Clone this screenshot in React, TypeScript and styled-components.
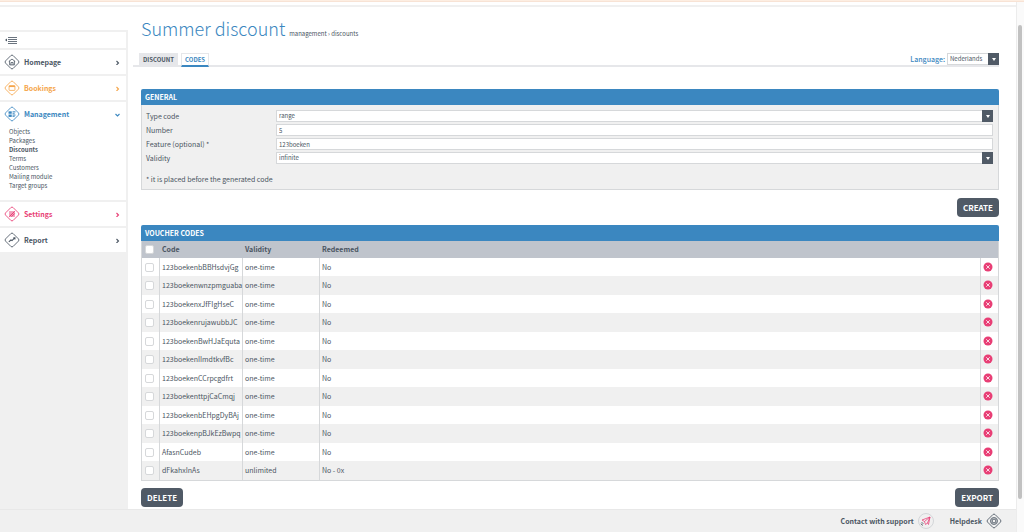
import React from "react";
import styled, { createGlobalStyle, css } from "styled-components";

const blue = "#3b87c0";
const ink = "#4a5562";
const orange = "#f5a54a";
const pink = "#e83e75";
const line = "#d6d8da";
const soft = "#f0f0f0";

const GlobalStyle = createGlobalStyle`
  *, *::before, *::after { box-sizing: border-box; }
  body {
    margin: 0;
    background: #fff;
    color: ${ink};
    font: 7px/9px "Noto Sans CJK SC", "Open Sans", sans-serif;
  }
  button, input, select { font: inherit; color: inherit; margin: 0; }
  a { color: inherit; text-decoration: none; }
  ul { list-style: none; margin: 0; padding: 0; }
`;

const Page = styled.div`
  display: flex;
  flex-direction: column;
  min-height: 100vh;
`;
const TopStrip = styled.div`
  height: 2px;
  background: #fdeee2;
  border-bottom: 1px solid #f8e3d5;
`;
const Body = styled.div`
  flex: 1;
  display: grid;
  grid-template-columns: minmax(0, 1fr) 8px;
`;
const Frame = styled.div`
  display: flex;
  flex-direction: column;
`;
const HeaderBar = styled.div`
  height: 5px;
  border-bottom: 2px solid ${soft};
`;
const Columns = styled.div`
  flex: 1;
  display: grid;
  grid-template-columns: 128px minmax(0, 1fr);
`;
const ScrollTrack = styled.div`
  background: #fafafa;
  border-left: 1px solid #ececec;
  padding: 23px 2px 33px 1px;
  display: flex;
`;
const ScrollThumb = styled.div`
  flex: 1;
  border-radius: 3px;
  background: #c1c1c1;
`;

const Sidebar = styled.nav`
  margin-top: 23px;
  padding: 2px 2px 0 0;
  background: ${soft};
  display: flex;
  flex-direction: column;
  gap: 2px;
`;
const Collapse = styled.button`
  height: 16px;
  padding: 0 5px;
  border: 0;
  background: #fff;
  display: flex;
  align-items: center;
`;
const NavGroup = styled.div`
  background: #fff;
`;
const NavLink = styled.a<{ $color: string }>`
  height: 24px;
  padding: 0 6px 0 4px;
  display: flex;
  align-items: center;
  gap: 4px;
  color: ${(p) => p.$color};
  font-weight: 700;
`;
const NavLabel = styled.span`
  flex: 1;
`;
const SubList = styled.ul`
  padding: 1px 9px 10px;
  font-size: 6px;
  li { height: 9px; }
`;
const SubLink = styled.a<{ $active: boolean }>`
  font-weight: ${(p) => (p.$active ? 700 : 400)};
`;

const Main = styled.main`
  padding: 10px 17px 0 13px;
`;
const TitleRow = styled.header`
  display: flex;
  align-items: baseline;
  gap: 4px;
`;
const Title = styled.h1`
  margin: 0;
  color: ${blue};
  font-size: 18px;
  line-height: 22px;
  font-weight: 300;
`;
const Breadcrumb = styled.span`
  font-size: 6px;
`;
const TabBar = styled.div`
  margin: 14px 0 22px -8px;
  padding-left: 6px;
  height: 14px;
  display: flex;
  gap: 3px;
  box-shadow: inset 0 -2px 0 #e6e7ea;
`;
const Tab = styled.a<{ $active?: boolean }>`
  padding: 0 4px;
  height: 14px;
  font-size: 6px;
  font-weight: 700;
  line-height: 14px;
  background: #e6e7ea;
  ${(p) =>
    p.$active &&
    css`
      padding: 0 3px;
      line-height: 12px;
      color: ${blue};
      background: #fff;
      border: 1px solid #e6e7ea;
      border-bottom: 2px solid ${blue};
    `}
`;
const Language = styled.label`
  margin-left: auto;
  display: flex;
  align-items: center;
  gap: 2px;
  height: 12px;
  color: ${blue};
  font-weight: 500;
`;

const SelectBox = styled.span<{ $width: string }>`
  position: relative;
  display: block;
  width: ${(p) => p.$width};
  height: 12px;
  color: ${ink};
  font-weight: 400;
`;
const SelectInput = styled.select`
  display: block;
  width: 100%;
  height: 12px;
  padding: 0 12px 0 2px;
  border: 1px solid ${line};
  border-radius: 0;
  background: #fff;
  appearance: none;
  font-size: 6px;
  line-height: 10px;
`;
const SelectArrow = styled.span`
  position: absolute;
  inset: 0 0 0 auto;
  width: 11px;
  background: #505a66;
  display: flex;
  align-items: center;
  justify-content: center;
  pointer-events: none;
`;
const TextInput = styled.input`
  display: block;
  width: 100%;
  height: 12px;
  padding: 0 2px;
  border: 1px solid ${line};
  border-radius: 0;
  background: #fff;
  font-size: 6px;
  line-height: 10px;
`;

const PanelTitle = styled.h2`
  margin: 0;
  height: 16px;
  padding: 0 4px;
  border-radius: 2px 2px 0 0;
  background: ${blue};
  color: #fff;
  font-size: 7px;
  line-height: 16px;
  font-weight: 700;
`;
const PanelBody = styled.div`
  padding: 5px 5px 5px 4px;
  border: 1px solid ${line};
  border-top: 0;
  background: ${soft};
`;
const Fields = styled.div`
  display: grid;
  grid-template-columns: 128px minmax(0, 1fr);
  gap: 2px;
  align-items: center;
`;
const Note = styled.p`
  margin: 11px 0 0;
`;
const Actions = styled.div<{ $space: string }>`
  display: flex;
  justify-content: space-between;
  padding: ${(p) => p.$space};
`;
const ActionButton = styled.button`
  height: 19px;
  padding: 0 6px;
  border: 0;
  border-radius: 4px;
  background: #505a66;
  color: #fff;
  font-size: 8px;
  line-height: 19px;
  font-weight: 700;
  &:only-child { margin-left: auto; }
`;

const Table = styled.table`
  width: 100%;
  table-layout: fixed;
  border-collapse: separate;
  border-spacing: 0;
  border: 1px solid ${line};
  border-top: 0;
  th, td {
    padding: 0 0 0 2px;
    text-align: left;
    vertical-align: middle;
    white-space: nowrap;
  }
  th { height: 17px; background: #bfc4cc; }
  td { height: 18px; }
  td + td { border-left: 1px solid ${line}; }
  th + th { padding-left: 3px; }
  tbody tr:nth-child(even) { background: ${soft}; }
  tbody tr:nth-child(even) td { height: 19px; }
`;
const Check = styled.input.attrs({ type: "checkbox" })`
  display: block;
  width: 9px;
  height: 9px;
  margin-left: 1px;
  appearance: none;
  border: 1px solid ${line};
  border-radius: 2px;
  background: #fff;
`;
const RemoveButton = styled.button`
  display: block;
  width: 10px;
  height: 10px;
  margin: 0 0 1px;
  padding: 0;
  border: 0;
  background: none;
  svg { display: block; }
`;

const Footer = styled.footer`
  height: 23px;
  padding: 0 14px;
  border-top: 1px solid #e8e8e8;
  background: ${soft};
  display: flex;
  align-items: center;
  justify-content: flex-end;
  gap: 16px;
`;
const FooterLink = styled.a`
  display: flex;
  align-items: center;
  gap: 4px;
  font-weight: 700;
`;

const glyphs: Record<string, React.ReactNode> = {
  home: (
    <>
      <path d="M9 14 15 9.500l6 4.500M10.500 13v7.500h9V13" />
      <path d="M13 20.500v-4.500h4v4.500" />
    </>
  ),
  bookings: (
    <>
      <rect x="9.500" y="10.500" width="11" height="9" rx="1" />
      <path d="M9.500 12h11" strokeWidth="2.500" />
    </>
  ),
  management: (
    <g fill="currentColor" stroke="none">
      <rect x="8.500" y="10" width="6" height="4.500" />
      <rect x="8.500" y="16" width="6" height="4.500" />
      <rect x="16" y="10" width="5.500" height="2" />
      <rect x="16" y="13" width="4" height="1.500" />
      <rect x="16" y="16" width="5.500" height="2" />
      <rect x="16" y="19" width="4" height="1.500" />
    </g>
  ),
  settings: (
    <>
      <rect x="9.500" y="9.500" width="11" height="11" fill="currentColor" fillOpacity=".5" stroke="none" />
      <path d="M10 20l10-10M14 20l6-6" strokeWidth="1.800" />
    </>
  ),
  report: <path d="M9 18.500l4-3.500 2 1 5-5M17.500 11h3v3" strokeWidth="2" />,
  help: (
    <>
      <circle cx="15" cy="15" r="6.500" />
      <rect x="12" y="12" width="6" height="6" rx="2" />
      <path d="M13 8.500v4M17 8.500v4M13 17.500v4M17 17.500v4M8.500 13h4M8.500 17h4M17.500 13h4M17.500 17h4" strokeWidth="1" />
    </>
  ),
};

const DiamondIcon = ({ name }: { name: string }) => (
  <svg width="16" height="16" viewBox="0 0 30 30" fill="none" stroke="currentColor" strokeWidth="1.500" aria-hidden="true">
    <rect x="5" y="5" width="20" height="20" rx="3" transform="rotate(45 15 15)" />
    {glyphs[name]}
  </svg>
);

const Chevron = ({ down }: { down?: boolean }) => (
  <svg width="5" height="5" viewBox="0 0 10 10" fill="none" stroke="currentColor" strokeWidth="2.200" aria-hidden="true">
    <path d={down ? "M1 4l4 4 4-4" : "M3 2l4 4-4 4"} />
  </svg>
);

const Select = ({ id, value, width = "100%" }: { id: string; value: string; width?: string }) => (
  <SelectBox $width={width}>
    <SelectInput id={id} defaultValue={value}>
      <option>{value}</option>
    </SelectInput>
    <SelectArrow>
      <svg width="4" height="3" viewBox="0 0 4 3" aria-hidden="true">
        <path d="M0 0h4L2 3z" fill="#fff" />
      </svg>
    </SelectArrow>
  </SelectBox>
);

const navigation = [
  { label: "Homepage", icon: "home", color: ink },
  { label: "Bookings", icon: "bookings", color: orange },
  {
    label: "Management",
    icon: "management",
    color: blue,
    children: ["Objects", "Packages", "Discounts", "Terms", "Customers", "Mailing module", "Target groups"],
  },
  { label: "Settings", icon: "settings", color: pink },
  { label: "Report", icon: "report", color: ink },
];

const vouchers = [
  ["123boekenbBBHsdvjGg", "one-time", "No"],
  ["123boekenwnzpmguaba", "one-time", "No"],
  ["123boekenxJfFIgHseC", "one-time", "No"],
  ["123boekenrujawubbJC", "one-time", "No"],
  ["123boekenBwHJaEquta", "one-time", "No"],
  ["123boekenIImdtkvfBc", "one-time", "No"],
  ["123boekenCCrpcgdfrt", "one-time", "No"],
  ["123boekenttpjCaCmqj", "one-time", "No"],
  ["123boekenbEHpgDyBAj", "one-time", "No"],
  ["123boekenpBJkEzBwpq", "one-time", "No"],
  ["AfasnCudeb", "one-time", "No"],
  ["dFkahxInAs", "unlimited", "No - 0x"],
];

export default function App() {
  return (
    <Page>
      <GlobalStyle />
      <TopStrip />
      <Body>
        <Frame>
          <HeaderBar />
          <Columns>
            <Sidebar>
              <Collapse aria-label="Collapse menu">
                <svg width="12" height="8" viewBox="0 0 12 8" aria-hidden="true">
                  <path d="M2 2.500v3L0 4z" fill={ink} />
                  <path d="M3 1.500h9M3 3.500h9M3 5.500h9M3 7.500h9" stroke="#6b747f" strokeWidth="1" />
                </svg>
              </Collapse>
              {navigation.map((item) => (
                <NavGroup key={item.label}>
                  <NavLink href="#" $color={item.color}>
                    <DiamondIcon name={item.icon} />
                    <NavLabel>{item.label}</NavLabel>
                    <Chevron down={Boolean(item.children)} />
                  </NavLink>
                  {item.children && (
                    <SubList>
                      {item.children.map((child) => (
                        <li key={child}>
                          <SubLink href="#" $active={child === "Discounts"}>{child}</SubLink>
                        </li>
                      ))}
                    </SubList>
                  )}
                </NavGroup>
              ))}
            </Sidebar>
            <Main>
              <TitleRow>
                <Title>Summer discount</Title>
                <Breadcrumb>management › discounts</Breadcrumb>
              </TitleRow>
              <TabBar>
                <Tab href="#">DISCOUNT</Tab>
                <Tab href="#" $active>CODES</Tab>
                <Language htmlFor="language">
                  Language:
                  <Select id="language" value="Nederlands" width="52px" />
                </Language>
              </TabBar>
              <section>
                <PanelTitle>GENERAL</PanelTitle>
                <PanelBody>
                  <Fields>
                    <label htmlFor="type">Type code</label>
                    <Select id="type" value="range" />
                    <label htmlFor="number">Number</label>
                    <TextInput id="number" defaultValue="5" />
                    <label htmlFor="feature">Feature (optional) *</label>
                    <TextInput id="feature" defaultValue="123boeken" />
                    <label htmlFor="validity">Validity</label>
                    <Select id="validity" value="infinite" />
                  </Fields>
                  <Note>* it is placed before the generated code</Note>
                </PanelBody>
              </section>
              <Actions $space="8px 0 8px">
                <ActionButton>CREATE</ActionButton>
              </Actions>
              <section>
                <PanelTitle>VOUCHER CODES</PanelTitle>
                <Table>
                  <colgroup>
                    <col style={{ width: 17 }} />
                    <col style={{ width: 83 }} />
                    <col style={{ width: 77 }} />
                    <col />
                    <col style={{ width: 18 }} />
                  </colgroup>
                  <thead>
                    <tr>
                      <th><Check aria-label="Select all codes" /></th>
                      <th>Code</th>
                      <th>Validity</th>
                      <th>Redeemed</th>
                      <th aria-label="Remove" />
                    </tr>
                  </thead>
                  <tbody>
                    {vouchers.map(([code, validity, redeemed]) => (
                      <tr key={code}>
                        <td><Check aria-label={`Select ${code}`} /></td>
                        <td>{code}</td>
                        <td>{validity}</td>
                        <td>{redeemed}</td>
                        <td>
                          <RemoveButton aria-label={`Remove ${code}`}>
                            <svg width="10" height="10" viewBox="0 0 20 20" aria-hidden="true">
                              <circle cx="10" cy="10" r="9" fill={pink} />
                              <path d="M6.500 6.500l7 7M13.500 6.500l-7 7" stroke="#fff" strokeWidth="1.600" />
                            </svg>
                          </RemoveButton>
                        </td>
                      </tr>
                    ))}
                  </tbody>
                </Table>
              </section>
              <Actions $space="7px 0 2px">
                <ActionButton>DELETE</ActionButton>
                <ActionButton>EXPORT</ActionButton>
              </Actions>
            </Main>
          </Columns>
          <Footer>
            <FooterLink href="#">
              Contact with support
              <svg width="16" height="16" viewBox="0 0 32 32" fill="none" aria-hidden="true">
                <circle cx="16" cy="16" r="15" stroke="#c9ccd0" strokeWidth="1.500" />
                <path d="M24 8 8 14l5 3 2 6 4-3 2 3zM24 8 13 17M24 8l-5 12" stroke={pink} strokeWidth="1.500" />
                <path d="M7 18l4 4M7 23l3 2M6 21l2 3" stroke={ink} strokeWidth="1.500" />
              </svg>
            </FooterLink>
            <FooterLink href="#">
              Helpdesk
              <DiamondIcon name="help" />
            </FooterLink>
          </Footer>
        </Frame>
        <ScrollTrack>
          <ScrollThumb />
        </ScrollTrack>
      </Body>
    </Page>
  );
}
